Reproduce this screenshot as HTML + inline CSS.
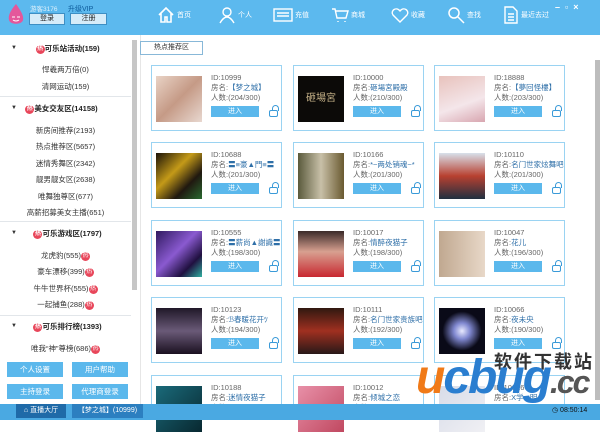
<!DOCTYPE html>
<html><head><meta charset="utf-8"><style>
*{margin:0;padding:0;box-sizing:border-box}
body{width:600px;height:420px;overflow:hidden;font-family:"Liberation Sans","Noto Sans CJK SC",sans-serif;font-size:8px;color:#333;background:#fff;position:relative}
.hdr{position:absolute;left:0;top:0;width:600px;height:35px;background:#5cb9ee}
.a{position:absolute;white-space:nowrap}
.nav{position:absolute;top:6px;color:#fff;font-size:7px}
.nav svg{vertical-align:middle}
.side{position:absolute;left:0;top:35px;width:140px;height:369px;background:#fff}
.sep{position:absolute;left:0;width:131px;height:1px;background:#e2e6ea}
.it{position:absolute;width:131px;text-align:center;font-size:7.5px;color:#333}
.hd{font-weight:bold;color:#222}
.bd{display:inline-block;width:9px;height:9px;border-radius:50%;background:#e8465a;color:#fff;font-size:6px;line-height:9px;text-align:center;vertical-align:middle}
.arr{position:absolute;left:11px;font-size:6px;color:#333}
.btn{position:absolute;width:56px;height:15px;background:#5bb8ec;color:#fff;text-align:center;line-height:15px;font-size:7.5px}
.card{position:absolute;width:131px;height:66px;border:1px solid #9ad3f2;background:#fff}
.th{position:absolute;left:4px;top:10px;width:46px;height:46px}
.tx{position:absolute;left:59px;font-size:7.5px;line-height:10px;color:#666}
.tx b{font-weight:normal;color:#2e6fa8}
.go{position:absolute;left:59px;top:40px;width:48px;height:11px;background:#5bb8ec;color:#fff;text-align:center;line-height:11px;font-size:7px}
.lk{position:absolute;left:117px;top:44px;width:9px;height:7px;border:1.5px solid #3a9ad8;border-radius:2px}
.lk:before{content:"";position:absolute;left:2px;top:-6px;width:5px;height:5px;border:1.5px solid #3a9ad8;border-bottom:none;border-radius:4px 4px 0 0}
.ftr{position:absolute;left:0;top:404px;width:600px;height:16px;background:#4aa9e2}
</style></head><body>
<div class="hdr">
  <svg class="a" style="left:6px;top:3px" width="20" height="24"><path d="M10 1 C4 8 2 13 3 17 C4 22 16 22 17 17 C18 13 15 8 10 1Z" fill="#e4579b"/><path d="M6 14h3M11 14h3" stroke="#fff"/><path d="M7 17q3 2 6 0" stroke="#fff" fill="none"/></svg>
  <div class="a" style="left:30px;top:3px;color:#fff;font-size:6.5px;opacity:.8">游客3176</div>
  <div class="a" style="left:68px;top:4px;color:#0c5a9a;font-size:7px">升级VIP</div>
  <div class="a" style="left:29px;top:13px;width:36px;height:12px;background:#d6ecf9;border:1px solid #3e8fc4;text-align:center;font-size:7px;line-height:10px;color:#222">登录</div>
  <div class="a" style="left:70px;top:13px;width:37px;height:12px;background:#d6ecf9;border:1px solid #3e8fc4;text-align:center;font-size:7px;line-height:10px;color:#222">注册</div>
  <div class="nav" style="left:157px"><svg width="18" height="18" fill="none" stroke="#fff" stroke-width="1.6"><path d="M2 9L9 2L16 9M4 7v9h4v-5h2v5h4V7"/></svg> 首页</div>
  <div class="nav" style="left:218px"><svg width="18" height="18" fill="none" stroke="#fff" stroke-width="1.4"><circle cx="9" cy="6" r="4"/><path d="M2 17q7-12 14 0"/></svg> 个人</div>
  <div class="nav" style="left:273px"><svg width="20" height="18" fill="none" stroke="#fff" stroke-width="1.4"><rect x="1" y="3" width="18" height="12"/><path d="M4 7h12M4 10h12"/></svg> 充值</div>
  <div class="nav" style="left:331px"><svg width="18" height="18" fill="none" stroke="#fff" stroke-width="1.4"><path d="M1 3h3l2 9h9l2-7H5M7 15v1M14 15v1"/></svg> 商城</div>
  <div class="nav" style="left:391px"><svg width="18" height="18" fill="none" stroke="#fff" stroke-width="1.4"><path d="M9 16L2 9C-1 5 5 0 9 5C13 0 19 5 16 9Z"/></svg> 收藏</div>
  <div class="nav" style="left:447px"><svg width="18" height="18" fill="none" stroke="#fff" stroke-width="1.5"><circle cx="7" cy="7" r="5"/><path d="M11 11l6 6"/></svg> 查找</div>
  <div class="nav" style="left:503px"><svg width="16" height="18" fill="none" stroke="#fff" stroke-width="1.4"><path d="M2 1h8l4 4v12H2z M5 8h6M5 11h6M5 14h6"/></svg> 最近去过</div>
  <div class="a" style="left:555px;top:2px;color:#fff;font-size:9px;font-weight:bold">–&nbsp;&nbsp;▫&nbsp;&nbsp;×</div>
</div>
<div class="side">
  <div class="a" style="left:132px;top:5px;width:5px;height:250px;background:#c6c6c6"></div>
  <div class="arr" style="top:10px">▼</div><div class="it hd" style="top:8px">&nbsp;&nbsp;<span class="bd">热</span>可乐站活动(159)</div>
  <div class="it" style="top:29px">悍羲两万倍(0)</div>
  <div class="it" style="top:46px">清网运动(159)</div>
  <div class="sep" style="top:61px"></div>
  <div class="arr" style="top:70px">▼</div><div class="it hd" style="top:68px;padding-right:8px"><span class="bd">热</span>美女交友区(14158)</div>
  <div class="it" style="top:90px">新房间推荐(2193)</div>
  <div class="it" style="top:106px">热点推荐区(5657)</div>
  <div class="it" style="top:123px">迷情秀舞区(2342)</div>
  <div class="it" style="top:139px">靓男靓女区(2638)</div>
  <div class="it" style="top:156px">唯舞独尊区(677)</div>
  <div class="it" style="top:172px">高薪招募美女主播(651)</div>
  <div class="sep" style="top:186px"></div>
  <div class="arr" style="top:195px">▼</div><div class="it hd" style="top:193px">&nbsp;&nbsp;<span class="bd">热</span>可乐游戏区(1797)</div>
  <div class="it" style="top:215px">龙虎豹(555)<span class="bd">热</span></div>
  <div class="it" style="top:231px">豪车漂移(399)<span class="bd">热</span></div>
  <div class="it" style="top:248px">牛牛世界杯(555)<span class="bd">热</span></div>
  <div class="it" style="top:264px">一起捕鱼(288)<span class="bd">热</span></div>
  <div class="sep" style="top:280px"></div>
  <div class="arr" style="top:288px">▼</div><div class="it hd" style="top:286px">&nbsp;&nbsp;<span class="bd">热</span>可乐排行榜(1393)</div>
  <div class="it" style="top:308px">唯我“神”尊榜(686)<span class="bd">热</span></div>
  <div class="btn" style="left:7px;top:327px">个人设置</div>
  <div class="btn" style="left:72px;top:327px">用户帮助</div>
  <div class="btn" style="left:7px;top:349px">主持登录</div>
  <div class="btn" style="left:72px;top:349px">代理商登录</div>
</div>
<div class="a" style="left:140px;top:35px;width:1px;height:369px;background:#e6e6e6"></div>
<div class="a" style="left:140px;top:41px;width:63px;height:14px;border:1px solid #88b8d8;text-align:center;line-height:12px;font-size:7px;color:#333">热点推荐区</div>
<div class="a" style="left:595px;top:60px;width:5px;height:340px;background:#bdbdbd"></div>

<div class="card" style="left:151px;top:65px"><div class="th" style="background:linear-gradient(135deg,#e9d3c6,#c59a86 50%,#e8d8d0)"></div><div class="tx" style="top:7px">ID:10999<br>房名:<b>【梦之城】</b><br>人数:(204/300)</div><div class="go">进入</div><div class="lk"></div></div>
<div class="card" style="left:293px;top:65px"><div class="th" style="background:#0c0a08;color:#c8b48a;font-size:10px;text-align:center;line-height:46px">砸場宮</div><div class="tx" style="top:7px">ID:10000<br>房名:<b>砸場宮殿殿</b><br>人数:(210/300)</div><div class="go">进入</div><div class="lk"></div></div>
<div class="card" style="left:434px;top:65px"><div class="th" style="background:linear-gradient(160deg,#e8c2bc,#f4e6ea 60%,#d8a6b0)"></div><div class="tx" style="top:7px">ID:18888<br>房名:<b>【夢回怪樓】</b><br>人数:(203/300)</div><div class="go">进入</div><div class="lk"></div></div>

<div class="card" style="left:151px;top:142px"><div class="th" style="background:linear-gradient(135deg,#1a1208,#c49a18 40%,#201810 70%,#2a6a30)"></div><div class="tx" style="top:7px">ID:10688<br>房名:<b>〓≡豪▲門≡〓</b><br>人数:(201/300)</div><div class="go">进入</div><div class="lk"></div></div>
<div class="card" style="left:293px;top:142px"><div class="th" style="background:linear-gradient(90deg,#5a5a3c,#c8c0a8 50%,#6a5a30)"></div><div class="tx" style="top:7px">ID:10166<br>房名:<b>*~两处销魂~*</b><br>人数:(201/300)</div><div class="go">进入</div><div class="lk"></div></div>
<div class="card" style="left:434px;top:142px"><div class="th" style="background:linear-gradient(180deg,#d8e0ea,#b84030 50%,#203040)"></div><div class="tx" style="top:7px">ID:10110<br>房名:<b>名门世家炫舞吧</b><br>人数:(201/300)</div><div class="go">进入</div><div class="lk"></div></div>

<div class="card" style="left:151px;top:220px"><div class="th" style="background:linear-gradient(135deg,#301a60,#8a5ad0 45%,#201040 75%,#30b0a0)"></div><div class="tx" style="top:7px">ID:10555<br>房名:<b>〓薪尚▲謝識〓</b><br>人数:(198/300)</div><div class="go">进入</div><div class="lk"></div></div>
<div class="card" style="left:293px;top:220px"><div class="th" style="background:linear-gradient(180deg,#3a2a28,#d8a090 45%,#c82830)"></div><div class="tx" style="top:7px">ID:10017<br>房名:<b>情醉夜猫子</b><br>人数:(198/300)</div><div class="go">进入</div><div class="lk"></div></div>
<div class="card" style="left:434px;top:220px"><div class="th" style="background:linear-gradient(90deg,#c0a890,#e8d8c8)"></div><div class="tx" style="top:7px">ID:10047<br>房名:<b>花儿</b><br>人数:(196/300)</div><div class="go">进入</div><div class="lk"></div></div>

<div class="card" style="left:151px;top:297px"><div class="th" style="background:linear-gradient(180deg,#201828,#6a5a78 50%,#1a1020)"></div><div class="tx" style="top:7px">ID:10123<br>房名:<b>ℬ春暖花开ﾂ</b><br>人数:(194/300)</div><div class="go">进入</div><div class="lk"></div></div>
<div class="card" style="left:293px;top:297px"><div class="th" style="background:linear-gradient(180deg,#301810,#a03020 50%,#281818)"></div><div class="tx" style="top:7px">ID:10111<br>房名:<b>名门世家贵族吧</b><br>人数:(192/300)</div><div class="go">进入</div><div class="lk"></div></div>
<div class="card" style="left:434px;top:297px"><div class="th" style="background:radial-gradient(circle,#e8eaff 0,#8088d0 25%,#0a0a18 60%)"></div><div class="tx" style="top:7px">ID:10066<br>房名:<b>夜未央</b><br>人数:(190/300)</div><div class="go">进入</div><div class="lk"></div></div>

<div class="card" style="left:151px;top:375px;height:30px"><div class="th" style="background:linear-gradient(135deg,#1a6a7a,#082830)"></div><div class="tx" style="top:7px">ID:10188<br>房名:<b>迷情夜猫子</b><br>人数:(189/300)</div></div>
<div class="card" style="left:293px;top:375px;height:30px"><div class="th" style="background:linear-gradient(135deg,#e890a8,#c04860)"></div><div class="tx" style="top:7px">ID:10012<br>房名:<b>倾城之恋</b><br>人数:(188/300)</div></div>
<div class="card" style="left:434px;top:375px;height:30px"><div class="th" style="background:linear-gradient(135deg,#d8dce8,#f0f0f4)"></div><div class="tx" style="top:7px">ID:10016<br>房名:<b>X学...明</b></div></div>

<div class="a" style="left:494px;top:348px;font-size:18px;font-weight:bold;color:#333;letter-spacing:2px">软件下载站</div>
<div class="a" style="left:416px;top:350px;font-size:48px;font-weight:bold;font-style:italic;color:#f07a18;letter-spacing:-2px;line-height:56px">u<span style="color:#2a7ed0">cbug</span><span style="color:#555;font-size:32px">.cc</span></div>

<div class="ftr">
  <div class="a" style="left:16px;top:0;width:50px;height:14px;background:#1f6aa8;color:#fff;font-size:7px;line-height:14px;text-align:center">⌂ 直播大厅</div>
  <div class="a" style="left:72px;top:0;width:71px;height:14px;background:#2c7fc0;color:#fff;font-size:7px;line-height:14px;text-align:center">【梦之城】(10999)</div>
  <div class="a" style="left:552px;top:2px;color:#111;font-size:7px">◷ 08:50:14</div>
</div>
</body></html>
